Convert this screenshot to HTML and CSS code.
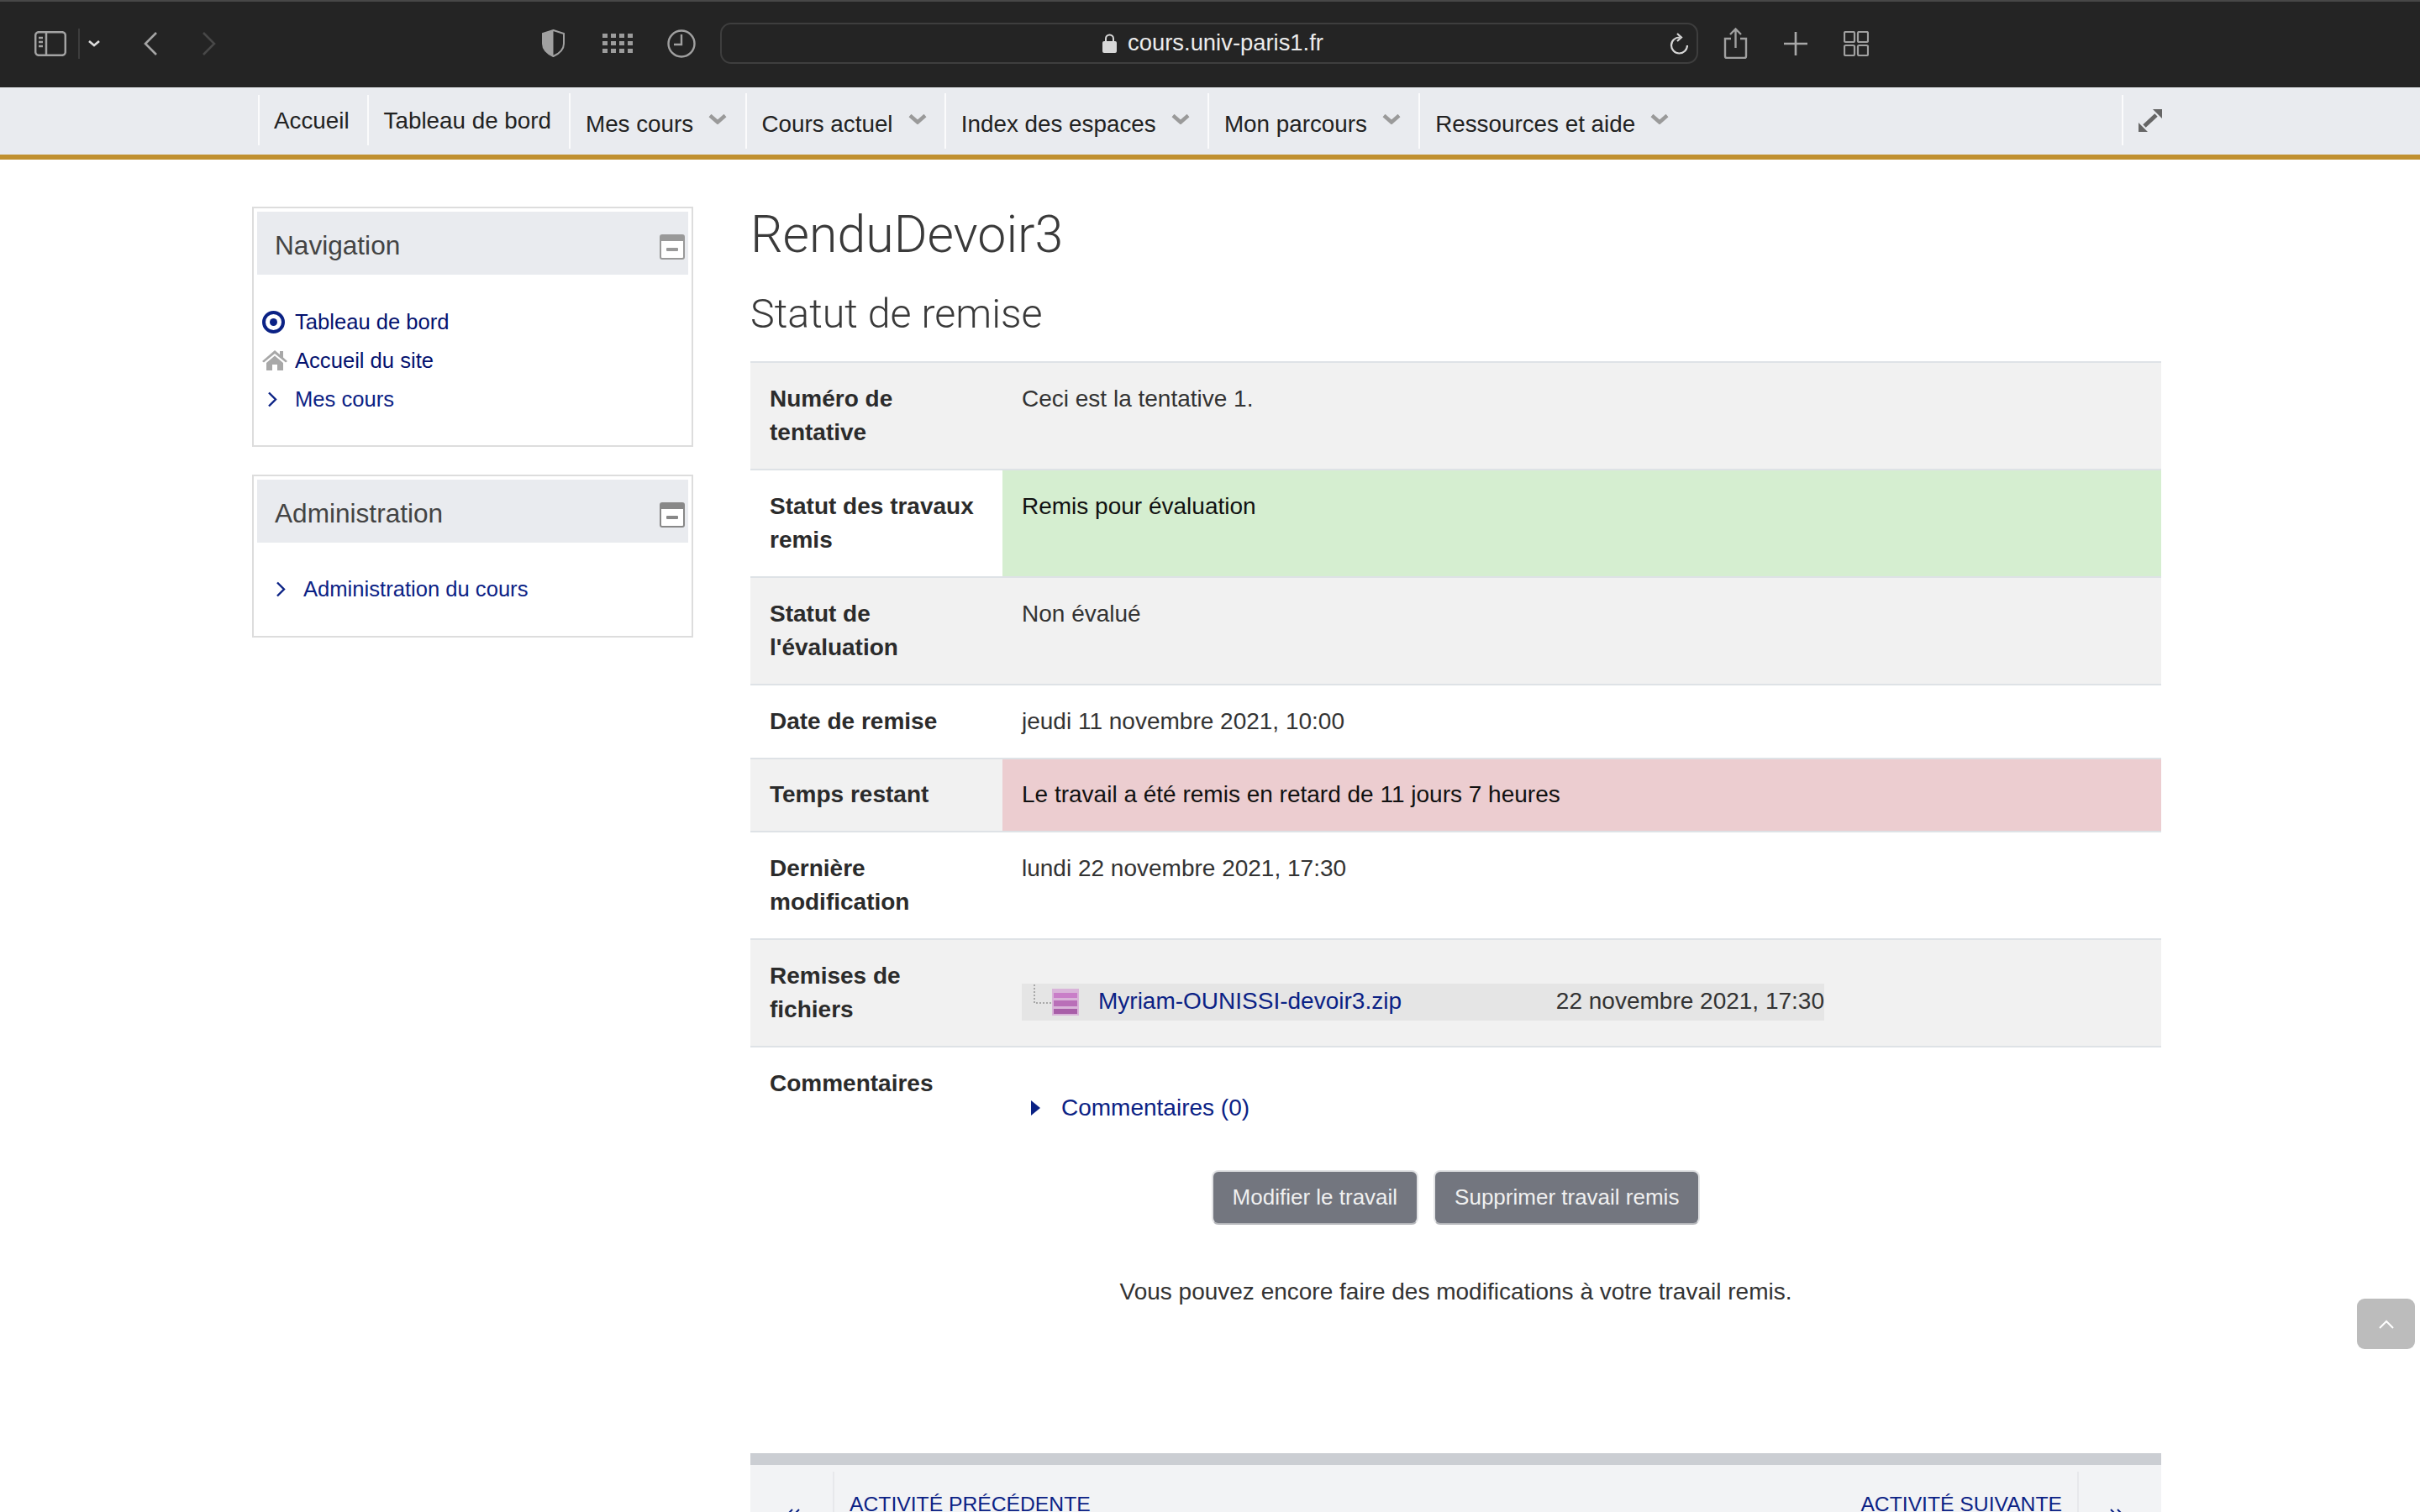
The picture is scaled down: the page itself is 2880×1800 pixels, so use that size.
FILE: index.html
```html
<!DOCTYPE html>
<html lang="fr">
<head>
    <meta charset="UTF-8">
    <title>RenduDevoir3</title>
    <link rel="stylesheet" href="styles.css">
</head>
<body>
    <header class="toolbar">
        <svg class="tb-sidebar" width="38" height="30" viewBox="0 0 38 30" fill="none" stroke="#a3a3a3" stroke-width="2.5"><rect x="1.2" y="1.2" width="35.6" height="27.6" rx="4"/><path d="M14 1v28M5 8h5M5 13h5M5 18h5"/></svg>
        <span class="tb-sep"></span>
        <svg class="tb-menu" width="14" height="8" viewBox="0 0 14 8" fill="none" stroke="#dcdcdc" stroke-width="2.6"><path d="M1 1l6 5 6-5"/></svg>
        <svg class="tb-back" width="16" height="28" viewBox="0 0 16 28" fill="none" stroke="#a5a5a5" stroke-width="2.6"><path d="M15 1L2 14l13 13"/></svg>
        <svg class="tb-forward" width="16" height="28" viewBox="0 0 16 28" fill="none" stroke="#484848" stroke-width="2.6"><path d="M1 1l13 13L1 27"/></svg>
        <svg class="tb-shield" width="27" height="33" viewBox="0 0 27 33"><path d="M13.5 1L26 5v12c0 7-6 12-12.500 15C7 29 1 24 1 17V5z" fill="#232323" stroke="#a0a0a0" stroke-width="2"/><path d="M13.500 1L1 5v12c0 7 6 12 12.500 15z" fill="#a0a0a0"/></svg>
        <svg class="tb-grid" width="36" height="24" viewBox="0 0 36 24" fill="#9c9c9c"><rect x="0" y="0" width="6" height="5"/><rect x="10" y="0" width="6" height="5"/><rect x="20" y="0" width="6" height="5"/><rect x="30" y="0" width="6" height="5"/><rect x="0" y="9" width="6" height="5"/><rect x="10" y="9" width="6" height="5"/><rect x="20" y="9" width="6" height="5"/><rect x="30" y="9" width="6" height="5"/><rect x="0" y="18" width="6" height="5"/><rect x="10" y="18" width="6" height="5"/><rect x="20" y="18" width="6" height="5"/><rect x="30" y="18" width="6" height="5"/></svg>
        <svg class="tb-clock" width="34" height="34" viewBox="0 0 34 34" fill="none" stroke="#a0a0a0" stroke-width="2.4"><circle cx="17" cy="17" r="15.500"/><path d="M17 6v12H8"/></svg>
        <div class="url-bar">
            <span></span>
            <span class="url">
                <svg width="17" height="23" viewBox="0 0 17 23"><path d="M4 10V6a4.500 4.500 0 0 1 9 0v4" fill="none" stroke="#d8d8d8" stroke-width="2"/><rect x="0" y="9" width="17" height="14" rx="2" fill="#d8d8d8"/></svg>
                cours.univ-paris1.fr
            </span>
            <svg class="reload" width="22" height="26" viewBox="0 0 22 26" fill="none" stroke="#d6d6d6" stroke-width="2.2"><path d="M12 5.500a9.500 9.500 0 1 0 9 9.500"/><path d="M9 1l5 4.500-5 4.500"/></svg>
        </div>
        <svg class="tb-share" width="29" height="37" viewBox="0 0 29 37" fill="none" stroke="#a0a0a0" stroke-width="2.4"><path d="M9 13H2v21a2 2 0 0 0 2 2h21a2 2 0 0 0 2-2V13h-7M14.500 24V2M8 8l6.500-6.500L21 8"/></svg>
        <svg class="tb-plus" width="28" height="28" viewBox="0 0 28 28" stroke="#a8a8a8" stroke-width="2.6"><path d="M14 0v28M0 14h28"/></svg>
        <svg class="tb-tabs" width="30" height="30" viewBox="0 0 30 30" fill="none" stroke="#a0a0a0" stroke-width="2.2"><rect x="1" y="1" width="12" height="12" rx="1.500"/><rect x="17" y="1" width="12" height="12" rx="1.500"/><rect x="1" y="17" width="12" height="12" rx="1.500"/><rect x="17" y="17" width="12" height="12" rx="1.500"/></svg>
    </header>

    <nav class="site-nav">
        <a class="nav-item plain home">Accueil</a>
        <a class="nav-item plain board">Tableau de bord</a>
        <a class="nav-item drop">Mes cours <svg class="caret" width="22" height="12" viewBox="0 0 22 12" fill="none" stroke="#9a9a9a" stroke-width="4.500"><path d="M2 1.500l9 8 9-8"/></svg></a>
        <a class="nav-item drop">Cours actuel <svg class="caret" width="22" height="12" viewBox="0 0 22 12" fill="none" stroke="#9a9a9a" stroke-width="4.500"><path d="M2 1.500l9 8 9-8"/></svg></a>
        <a class="nav-item drop">Index des espaces <svg class="caret" width="22" height="12" viewBox="0 0 22 12" fill="none" stroke="#9a9a9a" stroke-width="4.500"><path d="M2 1.500l9 8 9-8"/></svg></a>
        <a class="nav-item drop">Mon parcours <svg class="caret" width="22" height="12" viewBox="0 0 22 12" fill="none" stroke="#9a9a9a" stroke-width="4.500"><path d="M2 1.500l9 8 9-8"/></svg></a>
        <a class="nav-item drop">Ressources et aide <svg class="caret" width="22" height="12" viewBox="0 0 22 12" fill="none" stroke="#9a9a9a" stroke-width="4.500"><path d="M2 1.500l9 8 9-8"/></svg></a>
        <a class="nav-item plain nav-expand">
            <svg width="28" height="27" viewBox="0 0 28 27" fill="#666"><path d="M17 0h11v11zM0 16v11h11z"/><path d="M7 20L21 7" stroke="#666" stroke-width="5"/></svg>
        </a>
    </nav>

    <div class="page">
        <aside class="sidebar">
            <section class="block">
                <div class="block-head">
                    <h3>Navigation</h3>
                    <svg width="30" height="30" viewBox="0 0 30 30"><rect x="1" y="1" width="28" height="28" rx="2" fill="#fff" stroke="#999" stroke-width="2"/><rect x="1" y="1" width="28" height="7" fill="#999"/><rect x="8" y="16" width="14" height="4" rx="1" fill="#999"/></svg>
                </div>
                <ul class="tree">
                    <li>
                        <svg width="27" height="27" viewBox="0 0 27 27"><circle cx="13.500" cy="13.500" r="11.500" fill="none" stroke="#0b2285" stroke-width="4"/><circle cx="13.500" cy="13.500" r="4.500" fill="#0b2285"/></svg>
                        <a class="dark">Tableau de bord</a>
                    </li>
                    <li>
                        <svg width="30" height="24" viewBox="0 0 30 24" fill="#a8a8a8"><path d="M15 0L0 13l2 1.500L15 4l13 10.500L30 13l-5-4.500V1h-4v4z"/><path d="M5 15L15 6.500 25 15v9h-7v-7h-6v7H5z"/></svg>
                        <a class="dark">Accueil du site</a>
                    </li>
                    <li>
                        <svg class="chev" width="12" height="19" viewBox="0 0 12 19" fill="none" stroke="#0b2285" stroke-width="2.400"><path d="M2 1.500l8 8-8 8"/></svg>
                        <a>Mes cours</a>
                    </li>
                </ul>
            </section>
            <section class="block">
                <div class="block-head">
                    <h3>Administration</h3>
                    <svg width="30" height="30" viewBox="0 0 30 30"><rect x="1" y="1" width="28" height="28" rx="2" fill="#fff" stroke="#888" stroke-width="2"/><rect x="1" y="1" width="28" height="7" fill="#888"/><rect x="8" y="16" width="14" height="4" rx="1" fill="#888"/></svg>
                </div>
                <ul class="tree tree-admin">
                    <li>
                        <svg class="chev" width="12" height="19" viewBox="0 0 12 19" fill="none" stroke="#0b2285" stroke-width="2.400"><path d="M2 1.500l8 8-8 8"/></svg>
                        <a>Administration du cours</a>
                    </li>
                </ul>
            </section>
        </aside>

        <main class="content">
            <h1>RenduDevoir3</h1>
            <h2>Statut de remise</h2>
            <table class="status">
                <tr class="odd">
                    <th>Numéro de tentative</th>
                    <td>Ceci est la tentative 1.</td>
                </tr>
                <tr>
                    <th>Statut des travaux remis</th>
                    <td class="ok">Remis pour évaluation</td>
                </tr>
                <tr class="odd">
                    <th>Statut de l'évaluation</th>
                    <td>Non évalué</td>
                </tr>
                <tr>
                    <th>Date de remise</th>
                    <td>jeudi 11 novembre 2021, 10:00</td>
                </tr>
                <tr class="odd">
                    <th>Temps restant</th>
                    <td class="late">Le travail a été remis en retard de 11 jours 7 heures</td>
                </tr>
                <tr>
                    <th>Dernière modification</th>
                    <td>lundi 22 novembre 2021, 17:30</td>
                </tr>
                <tr class="odd">
                    <th>Remises de fichiers</th>
                    <td>
                        <div class="file-row">
                            <svg width="68" height="44" viewBox="0 0 68 44">
                                <path d="M15 1v22h21" fill="none" stroke="#a8a8a8" stroke-width="2" stroke-dasharray="2 2"/>
                                <rect x="36" y="6" width="32" height="32" fill="#d9b4d9"/>
                                <rect x="38" y="11" width="28" height="6" fill="#c97ec8"/>
                                <rect x="38" y="20" width="28" height="7" fill="#b96fb8"/>
                                <rect x="38" y="30" width="28" height="6" fill="#a85ea8"/>
                            </svg>
                            <a class="file-name">Myriam-OUNISSI-devoir3.zip</a>
                            <span class="file-date">22 novembre 2021, 17:30</span>
                        </div>
                    </td>
                </tr>
                <tr>
                    <th>Commentaires</th>
                    <td>
                        <div class="comments">
                            <svg width="11" height="18" viewBox="0 0 11 18" fill="#0b2285"><path d="M0 0l11 9-11 9z"/></svg>
                            <a>Commentaires (0)</a>
                        </div>
                    </td>
                </tr>
            </table>

            <div class="actions">
                <button class="btn">Modifier le travail</button>
                <button class="btn">Supprimer travail remis</button>
            </div>
            <p class="notice">Vous pouvez encore faire des modifications à votre travail remis.</p>

            <div class="activity-nav">
                <span class="activity-arrow arrow-prev">
                    <svg width="16" height="14" viewBox="0 0 16 14" fill="none" stroke="#0b2285" stroke-width="2"><path d="M7 1L1 7l6 6M15 1L9 7l6 6"/></svg>
                </span>
                <a class="activity-link">ACTIVITÉ PRÉCÉDENTE</a>
                <a class="activity-link link-next">ACTIVITÉ SUIVANTE</a>
                <span class="activity-arrow arrow-next">
                    <svg width="16" height="14" viewBox="0 0 16 14" fill="none" stroke="#0b2285" stroke-width="2"><path d="M1 1l6 6-6 6M9 1l6 6-6 6"/></svg>
                </span>
            </div>
        </main>
    </div>

    <a class="back-top">
        <svg width="18" height="11" viewBox="0 0 18 11" fill="none" stroke="#fff" stroke-width="2"><path d="M1 10l8-8 8 8"/></svg>
    </a>
</body>
</html>
```

FILE: styles.css
```css
* {
    box-sizing: border-box;
}
html, body {
    margin: 0;
    height: 1800px;
    overflow: hidden;
}
body {
    font-family: "Liberation Sans", Arial, sans-serif;
    font-size: 28px;
    line-height: 40.5px;
    color: #333;
    background: #fff;
}
a {
    color: #0b2285;
}

/* browser chrome */
.toolbar {
    display: flex;
    align-items: center;
    height: 104px;
    padding: 0 0 3px 41px;
    background: #242424;
    border-top: 2px solid #474747;
}
.toolbar svg {
    flex: none;
}
.tb-sep {
    width: 2px;
    height: 36px;
    margin-left: 14px;
    background: #3d3d3d;
}
.tb-menu { margin-left: 10px; }
.tb-back { margin-left: 52px; }
.tb-forward { margin-left: 54px; }
.tb-shield { margin-left: 388px; }
.tb-grid { margin-left: 45px; }
.tb-clock { margin-left: 41px; }
.tb-share { margin-left: 30px; }
.tb-plus { margin-left: 43px; }
.tb-tabs { margin-left: 43px; }
.url-bar {
    display: grid;
    grid-template-columns: 1fr auto 1fr;
    align-items: center;
    width: 1164px;
    height: 49px;
    margin-left: 29px;
    padding: 0 10px 0 19px;
    border: 2px solid #3e3e3e;
    border-radius: 13px;
}
.url {
    display: flex;
    align-items: center;
    gap: 13px;
    font-size: 27.4px;
    color: #ececec;
}
.reload {
    justify-self: end;
}

/* site nav */
.site-nav {
    display: flex;
    align-items: flex-start;
    height: 86px;
    padding: 0 290px 0 307px;
    background: #e9ebef;
    border-bottom: 6px solid #c09030;
    font-size: 27.8px;
    color: #222;
}
.nav-item {
    display: flex;
    align-items: center;
    border-left: 2px solid #fbfbfc;
    color: #222;
}
.plain {
    height: 60px;
    margin-top: 9px;
    padding: 3px 19px 0 18px;
}
.home {
    padding: 3px 21px 0 17px;
}
.board {
    padding-right: 21px;
}
.drop {
    height: 66px;
    margin-top: 7px;
    padding: 9px 21.3px 0 18px;
}
.caret {
    margin: 0 0 14px 18px;
}
.nav-expand {
    margin-left: auto;
    padding: 0 17px 0 18px;
}

/* page */
.page {
    display: flex;
    gap: 68px;
    padding-left: 300px;
}
.sidebar {
    flex: none;
    width: 525px;
    padding-top: 56px;
}
.block {
    margin-bottom: 33px;
    padding: 4px;
    border: 2px solid #ddd;
}
.block-head {
    display: flex;
    align-items: center;
    justify-content: space-between;
    height: 75px;
    padding: 6px 4px 0 21px;
    background: #e9ebef;
}
.block-head h3 {
    margin: 0;
    font-size: 31.6px;
    font-weight: 400;
    color: #444;
}
.block-head svg {
    margin-top: 2px;
}
.tree {
    margin: 0;
    padding: 33px 0 28px 6px;
    list-style: none;
    font-size: 25.6px;
}
.tree li {
    display: grid;
    grid-template-columns: 39px 1fr;
    align-items: center;
    height: 46px;
}
.chev {
    margin-left: 6px;
}
.tree a.dark {
    color: #04126f;
}
.tree-admin {
    padding: 32px 0 29px 16px;
}

/* main column */
.content {
    width: 1679px;
}
h1 {
    margin: 0;
    padding-top: 53px;
    font-family: Roboto, "Liberation Sans", sans-serif;
    font-size: 60.8px;
    font-weight: 300;
    line-height: 74px;
    color: #3a3a3a;
}
h2 {
    margin: 0;
    padding-top: 27px;
    font-family: Roboto, "Liberation Sans", sans-serif;
    font-size: 48.4px;
    font-weight: 300;
    line-height: 60px;
    color: #3a3a3a;
}
.status {
    width: 100%;
    margin-top: 26px;
    border-collapse: collapse;
    table-layout: fixed;
}
.status th, .status td {
    padding: 22.5px 23px;
    border-top: 2px solid #dee2e6;
    border-bottom: 2px solid #dee2e6;
    text-align: left;
    vertical-align: top;
}
.status tr:last-child th, .status tr:last-child td {
    border-bottom: 0;
}
.status th {
    width: 300px;
    font-weight: 700;
    color: #2b2b2b;
}
.odd th, .odd td {
    background: #f1f1f1;
}
.status td.ok {
    background: #d5eed0;
    color: #111;
}
.status td.late {
    background: #eccdd0;
    color: #111;
}
.file-row {
    display: flex;
    align-items: center;
    width: 955px;
    height: 44px;
    margin-top: 29px;
    background: #e5e5e5;
}
.file-name {
    margin-left: 23px;
}
.file-date {
    margin-left: auto;
}
.comments {
    display: flex;
    align-items: center;
    gap: 25px;
    margin: 29px 0 0 11px;
}
.actions {
    display: flex;
    justify-content: center;
    gap: 18px;
    margin-top: 31px;
}
.btn {
    height: 65px;
    padding: 0 23px;
    font: inherit;
    font-size: 26px;
    color: #f0f0f0;
    background: #73767f;
    border: 2px solid #e2e3e5;
    border-bottom-color: #b4b6ba;
    border-radius: 8px;
}
.notice {
    margin: 60px 0 0;
    text-align: center;
}
.activity-nav {
    display: flex;
    height: 90px;
    margin-top: 172px;
    background: #f2f3f5;
    border-top: 14px solid #cbced3;
    font-size: 24.7px;
}
.activity-link {
    padding: 27px 18px 0;
}
.link-next {
    margin-left: auto;
}
.activity-arrow {
    flex: none;
    width: 100px;
    height: 70px;
    margin-top: 8px;
    padding-top: 44px;
}
.activity-arrow svg {
    display: block;
    margin: 0 auto;
}
.arrow-prev {
    padding-left: 4px;
    border-right: 2px solid #e7e8eb;
}
.arrow-next {
    padding-right: 8px;
    border-left: 2px solid #e7e8eb;
}
.back-top {
    position: fixed;
    right: 6px;
    top: 1546px;
    display: flex;
    align-items: center;
    justify-content: center;
    width: 69px;
    height: 60px;
    background: #bcbcbc;
    border-radius: 9px;
}
```
